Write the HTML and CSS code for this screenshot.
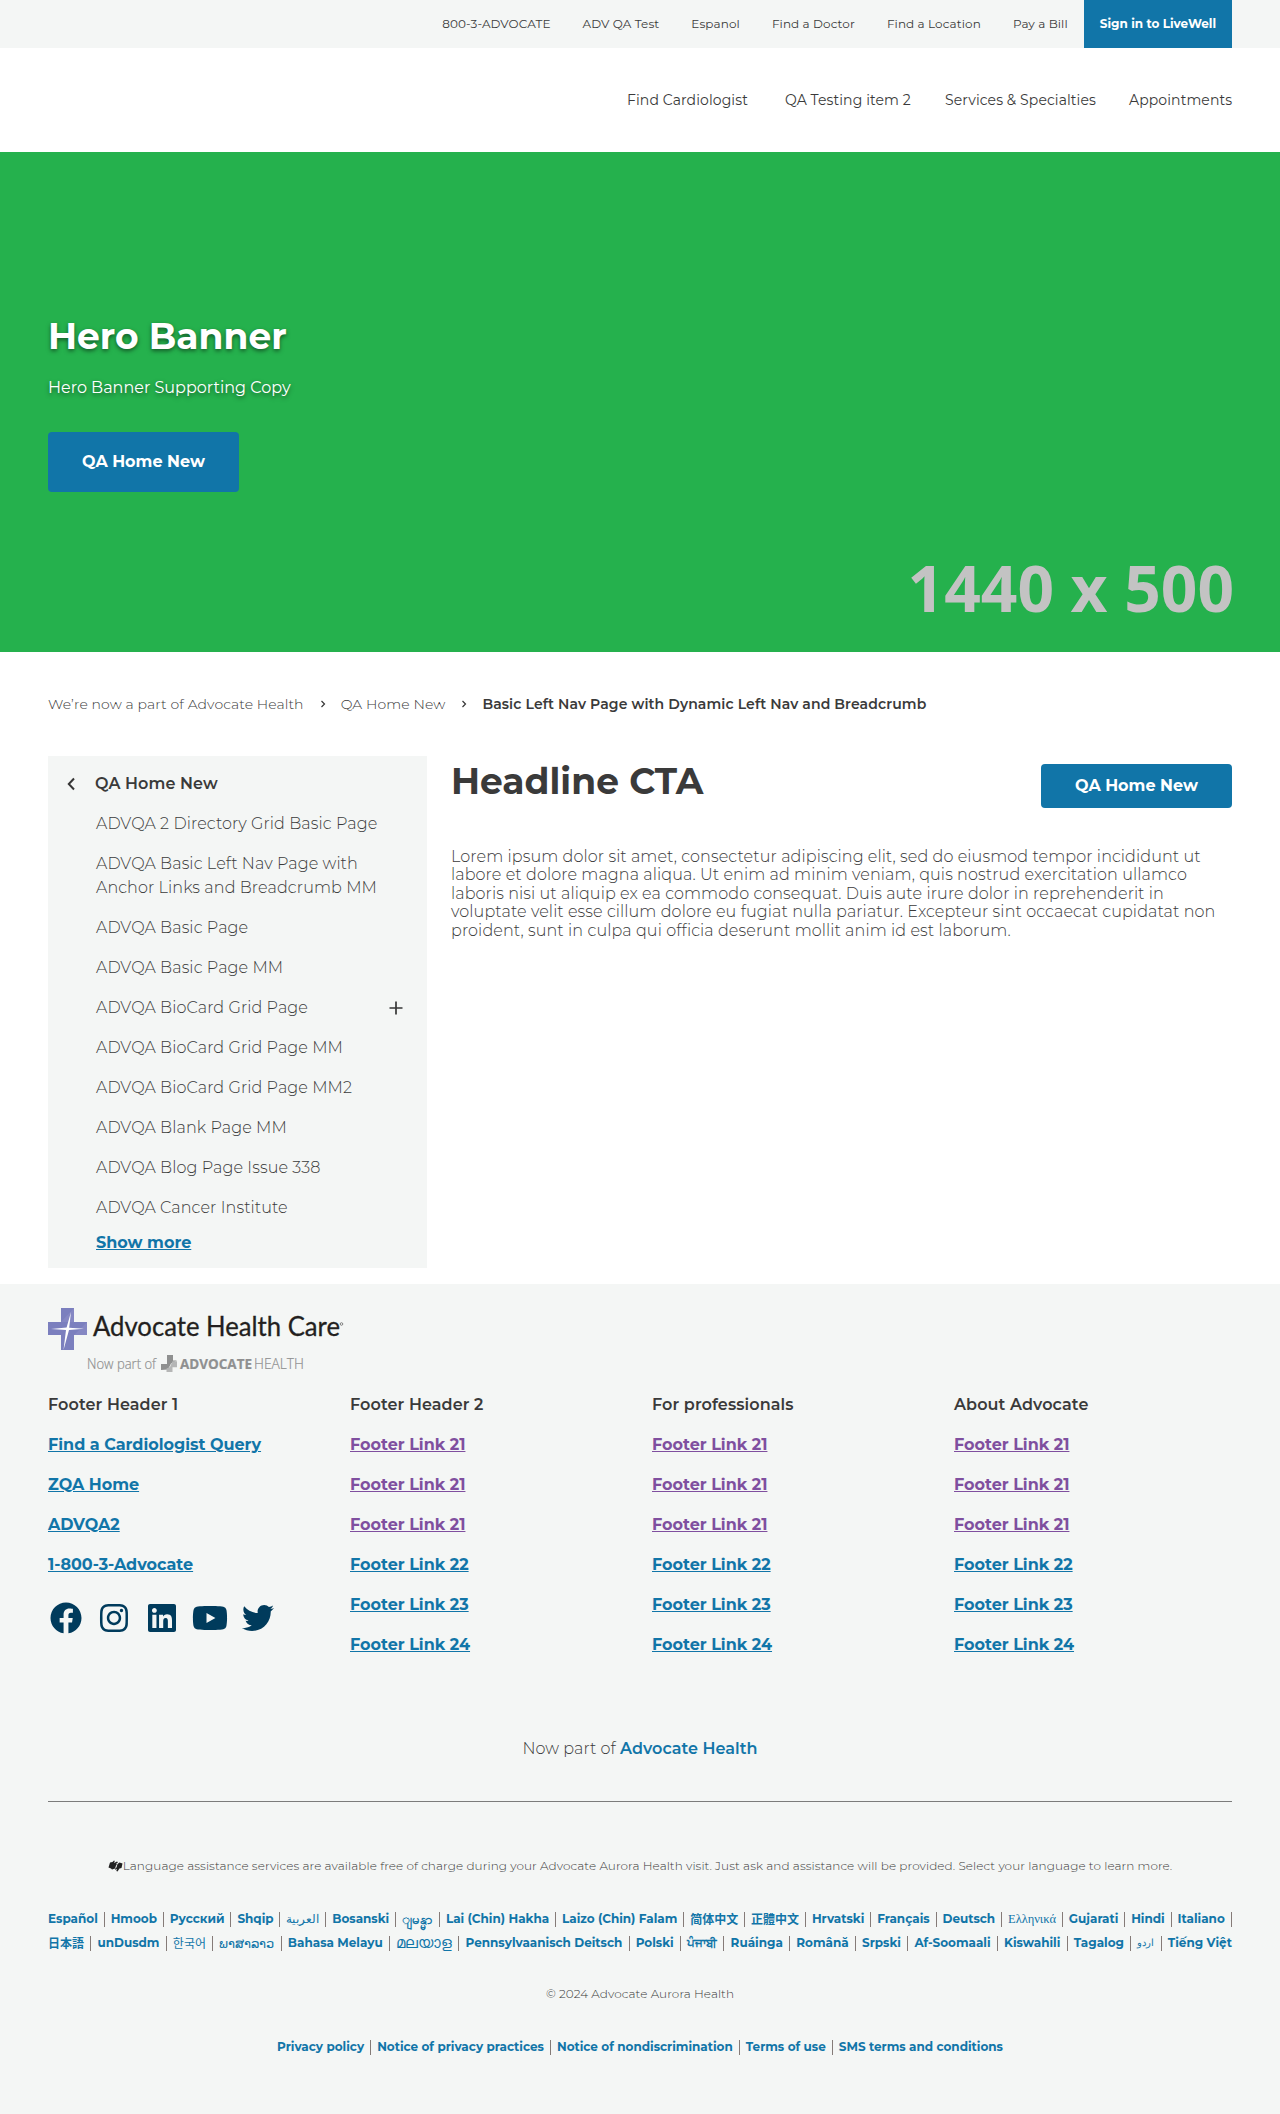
FILE: index.html
```html
<!DOCTYPE html>
<html lang="en">
<head>
<meta charset="utf-8">
<title>Basic Left Nav Page</title>
<link rel="stylesheet" href="styles.css">
</head>
<body>
<header>
  <nav class="utility">
    <a>800-3-ADVOCATE</a><a>ADV QA Test</a><a>Espanol</a><a>Find a Doctor</a><a>Find a Location</a><a>Pay a Bill</a><a class="signin">Sign in to LiveWell</a>
  </nav>
  <nav class="primary">
    <a>Find Cardiologist</a><a>QA Testing item 2</a><a>Services &amp; Specialties</a><a>Appointments</a>
  </nav>
</header>

<section class="hero">
  <div class="hero-copy">
    <h2>Hero Banner</h2>
    <p>Hero Banner Supporting Copy</p>
    <a class="btn btn-tall">QA Home New</a>
  </div>
  <div class="hero-size">1440 x 500</div>
</section>

<nav class="crumbs">
  <a>We’re now a part of Advocate Health</a>
  <svg width="6" height="8" viewBox="0 0 6 8"><path d="M1.5 1l3 3-3 3"/></svg>
  <a>QA Home New</a>
  <svg width="6" height="8" viewBox="0 0 6 8"><path d="M1.5 1l3 3-3 3"/></svg>
  <strong>Basic Left Nav Page with Dynamic Left Nav and Breadcrumb</strong>
</nav>

<main class="content">
  <aside class="sidenav">
    <div class="side-head"><svg width="8" height="14" viewBox="0 0 8 14"><path d="M7 1.5L1.8 7 7 12.5"/></svg><span>QA Home New</span></div>
    <ul>
      <li>ADVQA 2 Directory Grid Basic Page</li>
      <li>ADVQA Basic Left Nav Page with<br>Anchor Links and Breadcrumb MM</li>
      <li>ADVQA Basic Page</li>
      <li>ADVQA Basic Page MM</li>
      <li class="expand"><span>ADVQA BioCard Grid Page</span><svg width="14" height="14" viewBox="0 0 14 14"><path d="M7 .5v13M.5 7h13"/></svg></li>
      <li>ADVQA BioCard Grid Page MM</li>
      <li>ADVQA BioCard Grid Page MM2</li>
      <li>ADVQA Blank Page MM</li>
      <li>ADVQA Blog Page Issue 338</li>
      <li>ADVQA Cancer Institute</li>
    </ul>
    <a class="more">Show more</a>
  </aside>
  <article>
    <div class="headline"><h1>Headline CTA</h1><a class="btn">QA Home New</a></div>
    <p>Lorem ipsum dolor sit amet, consectetur adipiscing elit, sed do eiusmod tempor incididunt ut<br>labore et dolore magna aliqua. Ut enim ad minim veniam, quis nostrud exercitation ullamco<br>laboris nisi ut aliquip ex ea commodo consequat. Duis aute irure dolor in reprehenderit in<br>voluptate velit esse cillum dolore eu fugiat nulla pariatur. Excepteur sint occaecat cupidatat non<br>proident, sunt in culpa qui officia deserunt mollit anim id est laborum.</p>
  </article>
</main>

<footer>
  <svg class="logo" width="300" height="68" viewBox="0 0 300 68">
    <path fill="#7b7fbe" d="M13 0h13v14h13v13H26v15H13V27H0V14h13z"/>
    <path fill="#9a9dd0" d="M13 14L26 0v14zM26 27l13-13v13z" opacity=".3"/>
    <path fill="#fff" d="M23 4l-1.800 15.800L36 20.800l-15 1.200L15.500 42l2.500-20L3 21l15.600-1.400z"/>
    <g class="logo-name"><text x="45" y="28" textLength="247" lengthAdjust="spacingAndGlyphs">Advocate Health Care</text></g>
    <circle cx="293.500" cy="16" r="1.300" fill="none" stroke="#555" stroke-width=".7"/>
    <g class="logo-sub"><text x="39" y="61" textLength="69" lengthAdjust="spacingAndGlyphs">Now part of</text>
    <text class="heavy" x="132" y="61" textLength="72" lengthAdjust="spacingAndGlyphs">ADVOCATE</text>
    <text x="206" y="61" textLength="50" lengthAdjust="spacingAndGlyphs">HEALTH</text></g>
    <path fill="#8f9090" d="M119 47h6v5.500h4l-6 3-3 6-7 .5v-6h6z"/>
    <path fill="#b5b6b6" d="M124.500 53.200H129v6h-4.500V64h-6v-3.500l3.500-1.500z"/>
  </svg>

  <div class="columns">
    <div>
      <h3>Footer Header 1</h3>
      <a>Find a Cardiologist Query</a><a>ZQA Home</a><a>ADVQA2</a><a>1-800-3-Advocate</a>
      <div class="social">
        <svg viewBox="0 0 512 512"><path d="M504 256C504 119 393 8 256 8S8 119 8 256c0 123.780 90.690 226.380 209.250 245V327.690h-63V256h63v-54.640c0-62.150 37-96.480 93.670-96.480 27.140 0 55.520 4.840 55.520 4.840v61h-31.280c-30.800 0-40.410 19.120-40.410 38.730V256h68.780l-11 71.690h-57.780V501C413.310 482.380 504 379.780 504 256z"/></svg>
        <svg viewBox="-32 0 512 512"><path d="M224.100 141c-63.600 0-114.900 51.300-114.900 114.900s51.300 114.900 114.900 114.900S339 319.500 339 255.900 287.700 141 224.100 141zm0 189.600c-41.100 0-74.700-33.500-74.700-74.700s33.500-74.700 74.700-74.700 74.700 33.500 74.700 74.700-33.600 74.700-74.700 74.700zm146.400-194.300c0 14.900-12 26.800-26.800 26.800-14.900 0-26.800-12-26.800-26.800s12-26.800 26.800-26.800 26.800 12 26.800 26.800zm76.100 27.200c-1.700-35.900-9.900-67.700-36.200-93.900-26.200-26.200-58-34.400-93.900-36.200-37-2.100-147.900-2.100-184.900 0-35.800 1.700-67.600 9.900-93.900 36.100s-34.400 58-36.200 93.900c-2.100 37-2.100 147.900 0 184.900 1.700 35.900 9.900 67.700 36.200 93.900s58 34.400 93.900 36.200c37 2.100 147.900 2.100 184.900 0 35.900-1.700 67.700-9.900 93.900-36.200 26.200-26.200 34.400-58 36.200-93.900 2.100-37 2.100-147.800 0-184.800zM398.800 388c-7.800 19.600-22.900 34.700-42.600 42.600-29.500 11.700-99.500 9-132.100 9s-102.700 2.600-132.100-9c-19.600-7.800-34.700-22.900-42.600-42.600-11.700-29.500-9-99.500-9-132.100s-2.600-102.700 9-132.100c7.800-19.600 22.900-34.700 42.600-42.600 29.500-11.700 99.500-9 132.100-9s102.700-2.600 132.100 9c19.600 7.800 34.700 22.900 42.600 42.600 11.700 29.500 9 99.500 9 132.100s2.700 102.700-9 132.100z"/></svg>
        <svg viewBox="-32 0 512 512"><path d="M416 32H31.900C14.300 32 0 46.500 0 64.300v383.400C0 465.500 14.300 480 31.900 480H416c17.600 0 32-14.500 32-32.300V64.300c0-17.800-14.400-32.300-32-32.300zM135.400 416H69V202.200h66.500V416zm-33.200-243c-21.300 0-38.500-17.300-38.500-38.500S80.900 96 102.200 96c21.200 0 38.500 17.300 38.500 38.500 0 21.300-17.200 38.500-38.500 38.500zm282.100 243h-66.400V312c0-24.800-.5-56.700-34.500-56.700-34.600 0-39.900 27-39.900 54.900V416h-66.400V202.200h63.700v29.200h.9c8.900-16.800 30.600-34.500 62.900-34.500 67.200 0 79.700 44.300 79.700 101.900V416z"/></svg>
        <svg class="wide" viewBox="0 0 576 512"><path d="M549.655 124.083c-6.281-23.650-24.787-42.276-48.284-48.597C458.781 64 288 64 288 64S117.220 64 74.629 75.486c-23.497 6.322-42.003 24.947-48.284 48.597-11.412 42.867-11.412 132.305-11.412 132.305s0 89.438 11.412 132.305c6.281 23.650 24.787 41.500 48.284 47.821C117.220 448 288 448 288 448s170.780 0 213.371-11.486c23.497-6.321 42.003-24.171 48.284-47.821 11.412-42.867 11.412-132.305 11.412-132.305s0-89.438-11.412-132.305zm-317.510 213.508V175.185l142.739 81.205-142.739 81.201z"/></svg>
        <svg viewBox="0 0 512 512"><path d="M459.370 151.716c.325 4.548.325 9.097.325 13.645 0 138.720-105.583 298.558-298.558 298.558-59.452 0-114.680-17.219-161.137-47.106 8.447.974 16.568 1.299 25.340 1.299 49.055 0 94.213-16.568 130.274-44.832-46.132-.975-84.792-31.188-98.112-72.772 6.498.974 12.995 1.624 19.818 1.624 9.421 0 18.843-1.300 27.614-3.573-48.081-9.747-84.143-51.980-84.143-102.985v-1.299c13.969 7.797 30.214 12.670 47.431 13.319-28.264-18.843-46.781-51.005-46.781-87.391 0-19.492 5.197-37.360 14.294-52.954 51.655 63.675 129.300 105.258 216.365 109.807-1.624-7.797-2.599-15.918-2.599-24.040 0-57.828 46.782-104.934 104.934-104.934 30.213 0 57.502 12.670 76.670 33.137 23.715-4.548 46.456-13.320 66.599-25.340-7.798 24.366-24.366 44.833-46.132 57.827 21.117-2.273 41.584-8.122 60.426-16.243-14.292 20.791-32.161 39.308-52.628 54.253z"/></svg>
      </div>
    </div>
    <div>
      <h3>Footer Header 2</h3>
      <a class="visited">Footer Link 21</a><a class="visited">Footer Link 21</a><a class="visited">Footer Link 21</a><a>Footer Link 22</a><a>Footer Link 23</a><a>Footer Link 24</a>
    </div>
    <div>
      <h3>For professionals</h3>
      <a class="visited">Footer Link 21</a><a class="visited">Footer Link 21</a><a class="visited">Footer Link 21</a><a>Footer Link 22</a><a>Footer Link 23</a><a>Footer Link 24</a>
    </div>
    <div>
      <h3>About Advocate</h3>
      <a class="visited">Footer Link 21</a><a class="visited">Footer Link 21</a><a class="visited">Footer Link 21</a><a>Footer Link 22</a><a>Footer Link 23</a><a>Footer Link 24</a>
    </div>
  </div>

  <p class="part-of">Now part of <b>Advocate Health</b></p>
  <hr>
  <p class="assist"><svg width="15" height="12" viewBox="0 0 15 12"><path d="M.5 7.500L2 2.500 4.500 2 6 .5l.8.500L6 3l3-1.500 1 .7L8 4l1 .5-1 1-1 3L4 9.500l-1-1zM14.500 3.500l-1 4.500-2 .5-2 3-1.200-.5.700-2.200-2 1.200.5-2 1-.5L9.500 4l2-1.500z"/></svg><span>Language assistance services are available free of charge during your Advocate Aurora Health visit. Just ask and assistance will be provided. Select your language to learn more.</span></p>

  <div class="langs">
    <div><a>Español</a><i></i><a>Hmoob</a><i></i><a>Русский</a><i></i><a>Shqip</a><i></i><a class="small arabic">العربية</a><i></i><a>Bosanski</a><i></i><a class="burmese">ျမန္မာ</a><i></i><a>Lai (Chin) Hakha</a><i></i><a>Laizo (Chin) Falam</a><i></i><a class="cjk" lang="zh-Hans">简体中文</a><i></i><a class="cjk" lang="zh-Hant">正體中文</a><i></i><a>Hrvatski</a><i></i><a>Français</a><i></i><a>Deutsch</a><i></i><a class="greek">Ελληνικά</a><i></i><a>Gujarati</a><i></i><a>Hindi</a><i></i><a>Italiano</a><i></i></div>
    <div><a class="cjk" lang="ja">日本語</a><i></i><a>unDusdm</a><i></i><a class="cjk light" lang="ko">한국어</a><i></i><a class="plain lao">ພາສາລາວ</a><i></i><a>Bahasa Melayu</a><i></i><a class="plain wider">മലയാള</a><i></i><a>Pennsylvaanisch Deitsch</a><i></i><a>Polski</a><i></i><a>ਪੰਜਾਬੀ</a><i></i><a>Ruáinga</a><i></i><a>Română</a><i></i><a>Srpski</a><i></i><a>Af-Soomaali</a><i></i><a>Kiswahili</a><i></i><a>Tagalog</a><i></i><a class="small">اردو</a><i></i><a>Tiếng Việt</a></div>
  </div>

  <p class="copyright">© 2024 Advocate Aurora Health</p>
  <div class="legal"><a>Privacy policy</a><i></i><a>Notice of privacy practices</a><i></i><a>Notice of nondiscrimination</a><i></i><a>Terms of use</a><i></i><a>SMS terms and conditions</a></div>
</footer>
</body>
</html>
```
FILE: styles.css
```css
* { box-sizing: border-box; }
body { margin: 0; background: #fff; color: #3a3a3a; font-family: Montserrat, Inter, sans-serif; font-size: 16px; }
h1, h2, h3, p, ul { margin: 0; padding: 0; }
a, h1, h2, h3, strong { white-space: nowrap; }

.utility { display: flex; justify-content: flex-end; gap: 32px; padding-right: 48px; height: 48px; line-height: 48px; background: #f4f6f5; font-size: 12px; letter-spacing: .1px; }
.signin { margin-left: -16px; padding: 0 16px; background: #1175a8; color: #fff; font-weight: 700; letter-spacing: 0; }
.primary { display: grid; grid-template-columns: 158px 160px 184px 103px; padding-left: 627px; height: 104px; line-height: 104px; font-size: 14px; letter-spacing: .1px; }

.hero { display: flex; justify-content: space-between; height: 500px; padding: 0 46px 0 48px; background: #25b14d; color: #fff; }
.hero-copy { padding-top: 162px; }
.hero h2 { font-size: 36px; line-height: 44px; text-shadow: 0 2px 4px rgba(0,0,0,.5); }
.hero p { margin: 18px 0 32px; line-height: 24px; text-shadow: 0 2px 4px rgba(0,0,0,.5); }
.hero-size { align-self: flex-end; height: 108px; font: 700 64px/88px "Open Sans", sans-serif; color: #c3c3c3; }
.btn { display: block; width: 191px; height: 44px; line-height: 43px; border-radius: 4px; background: #1175a8; color: #fff; font-weight: 700; text-align: center; }
.btn-tall { height: 60px; line-height: 59px; }

.crumbs { display: flex; align-items: center; height: 104px; padding: 0 48px; font-size: 14px; font-weight: 300; letter-spacing: .1px; }
.crumbs svg { margin: 0 15px 0 16px; fill: none; stroke: #363636; stroke-width: 1.2; }
.crumbs strong { font-weight: 600; letter-spacing: .11px; }

.content { display: flex; gap: 24px; padding: 0 48px 16px; }
.sidenav { flex: none; width: 379px; height: 512px; padding: 16px 24px 0 48px; background: #f4f6f5; line-height: 24px; letter-spacing: .1px; }
.side-head { display: flex; align-items: center; gap: 20px; margin-left: -29px; font-weight: 600; }
.side-head svg { fill: none; stroke: #363636; stroke-width: 2; }
.sidenav ul { list-style: none; margin-top: 8px; font-weight: 300; }
.sidenav li { padding: 8px 0; white-space: nowrap; }
.expand { display: flex; justify-content: space-between; align-items: center; }
.expand svg { fill: none; stroke: #363636; stroke-width: 1.7; }
.more { display: block; margin-top: 3px; color: #1175a8; font-weight: 700; letter-spacing: 0; text-decoration: underline; }
article { flex: 1; }
.headline { display: flex; justify-content: space-between; padding-top: 8px; }
h1 { font-size: 36px; line-height: 34px; font-weight: 700; }
article p { margin-top: 40px; line-height: 18.4px; font-weight: 300; letter-spacing: .1px; white-space: nowrap; }

footer { height: 830px; padding: 24px 48px 0; background: #f4f6f5; }
.logo { display: block; }
.logo-name { font: 400 27px Lato, sans-serif; fill: #231f20; stroke: #231f20; stroke-width: .3; }
.logo-sub { font: 300 14.5px "Open Sans", sans-serif; fill: #8f9090; stroke: #8f9090; stroke-width: .2; }
.logo-sub .heavy { font-weight: 700; }
.columns { display: grid; grid-template-columns: repeat(4, 302px); margin-top: 17px; height: 264px; line-height: 24px; }
.columns h3 { font-size: inherit; font-weight: 600; letter-spacing: .1px; }
.columns a { display: block; width: max-content; margin-top: 16px; color: #1175a8; font-weight: 700; text-decoration: underline; }
.columns .visited { color: #7f4f9f; }
.social { display: flex; gap: 16px; margin-top: 25px; padding-left: 2px; }
.social svg { width: 32px; height: 32px; fill: #003b5c; }
.social .wide { width: 36px; margin: 0 -2px; }
.part-of { margin-top: 80px; text-align: center; line-height: 24px; font-weight: 300; letter-spacing: .05px; }
.part-of b { color: #1175a8; font-weight: 600; }
hr { margin: 40px 0 0; border: 0; border-top: 1px solid #7c7c7c; }
.assist { display: flex; justify-content: center; align-items: center; margin-top: 52px; line-height: 24px; font-size: 12px; font-weight: 300; letter-spacing: .085px; white-space: nowrap; }
.assist svg { fill: #222; }
.langs { margin-top: 29px; font-size: 12px; font-weight: 700; color: #1175a8; }
.langs div { display: flex; justify-content: space-between; align-items: center; height: 24px; line-height: 24px; }
.langs i, .legal i { width: 1px; height: 15px; background: #857b78; }
.cjk { font-family: "Noto Sans CJK SC", sans-serif; }
.cjk:lang(zh-Hant) { font-family: "Noto Sans CJK TC", sans-serif; }
.cjk:lang(ja) { font-family: "Noto Sans CJK JP", sans-serif; }
.cjk:lang(ko) { font-family: "Noto Sans CJK KR", sans-serif; }
.light, .plain { font-weight: 400; }
.wider { font-size: 14.5px; }
.lao { font-size: 13px; }
.small { font-size: 10px; font-weight: 400; }
.arabic { font-size: 12px; }
.burmese { font-size: 13px; }
.greek { font-family: "Liberation Serif", serif; font-size: 12.5px; font-weight: 400; }
.copyright { margin-top: 27px; text-align: center; line-height: 24px; font-size: 12px; font-weight: 300; letter-spacing: .085px; }
.legal { display: flex; justify-content: space-between; align-items: center; width: 726px; margin: 29px auto 0; line-height: 24px; font-size: 12px; font-weight: 700; color: #1175a8; }
```
